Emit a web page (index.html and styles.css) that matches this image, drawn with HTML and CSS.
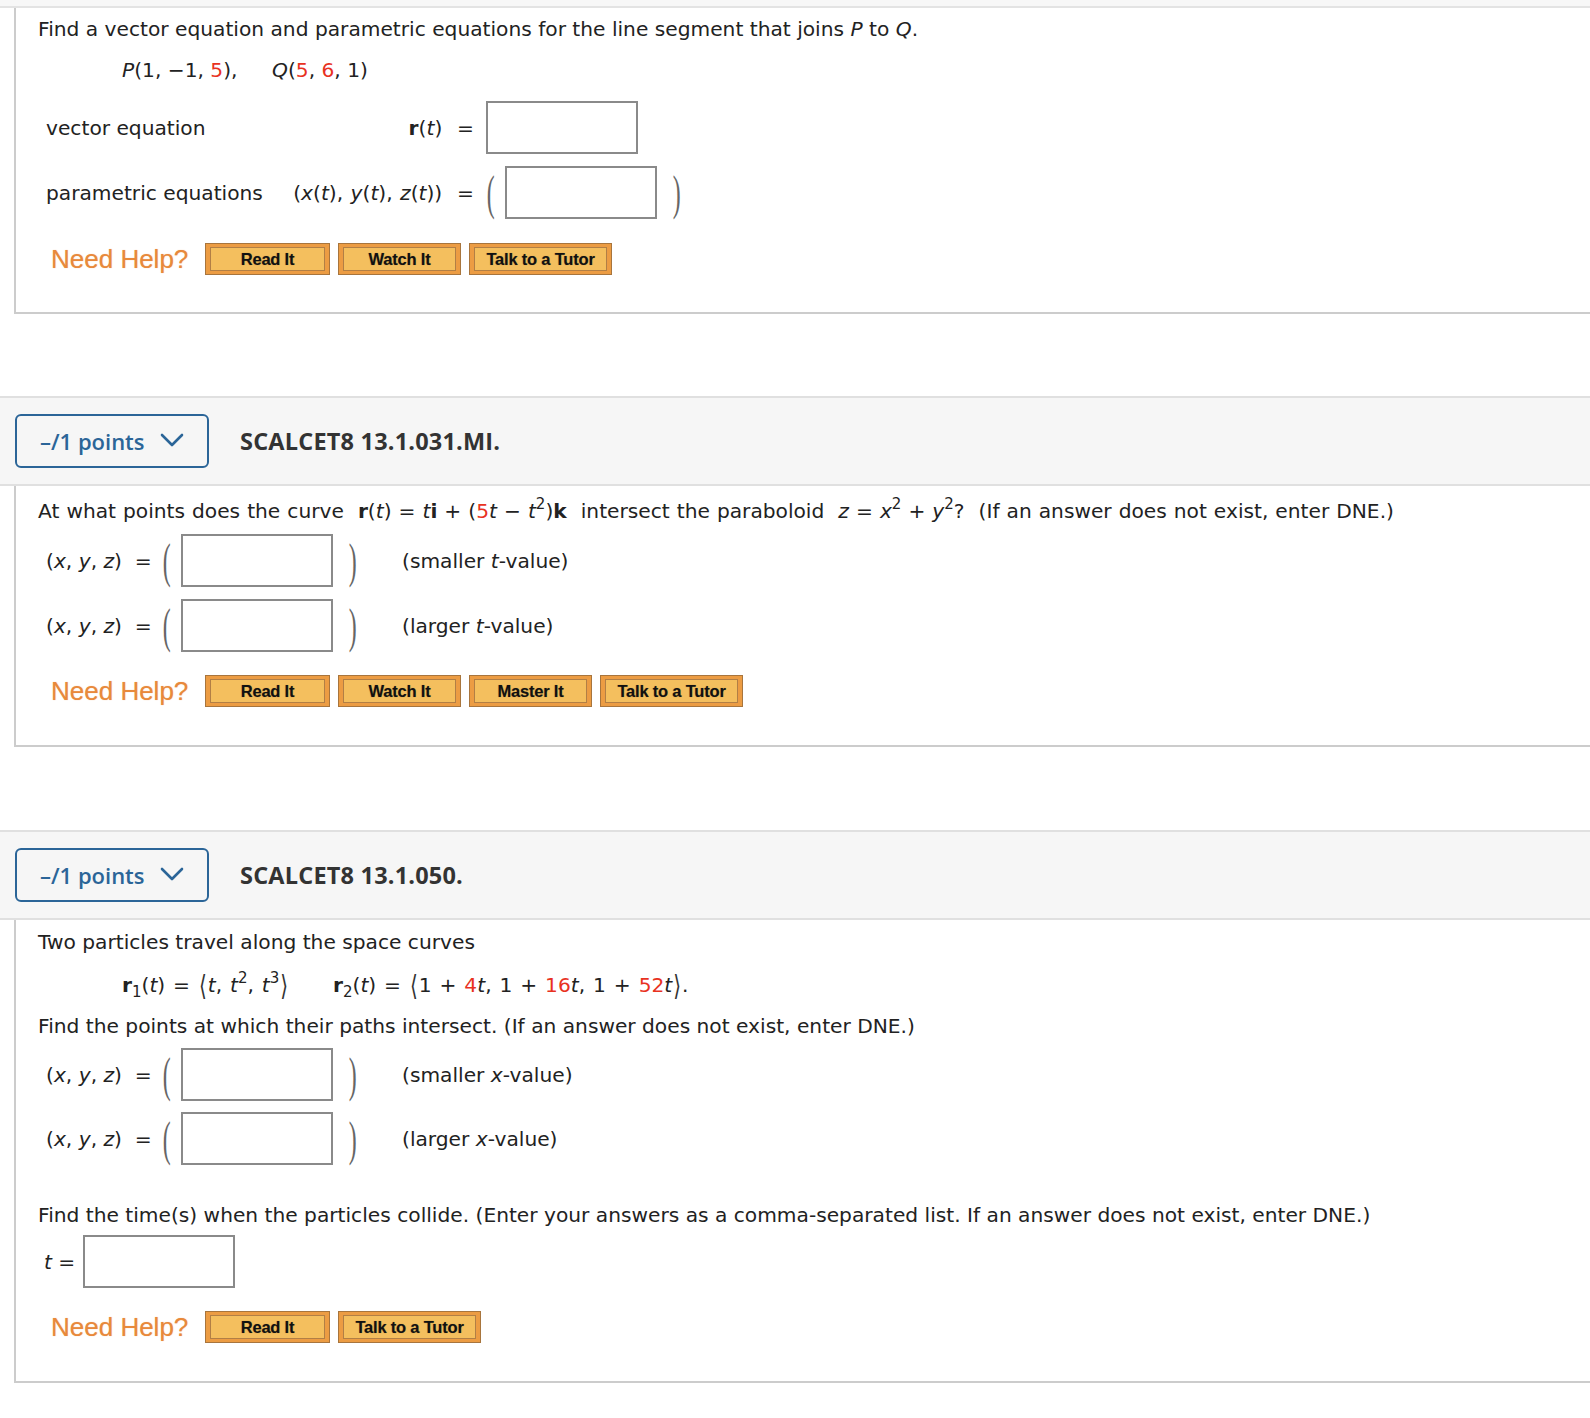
FILE: index.html
```html
<!DOCTYPE html>
<html>
<head>
<meta charset="utf-8">
<title>Questions</title>
<link rel="stylesheet" href="styles.css">
</head>
<body>
<div class="topbar"></div>

<section class="qbody q1">
  <p class="line">Find a vector equation and parametric equations for the line segment that joins <i>P</i> to <i>Q</i>.</p>
  <p class="line pts"><span class="ppt"><i>P</i>(1, −1, <span class="red">5</span>),</span><span><i>Q</i>(<span class="red">5</span>, <span class="red">6</span>, 1)</span></p>
  <div class="eqgrid">
    <div class="lbl">vector equation</div>
    <div class="math"><b>r</b>(<i>t</i>) &nbsp;=</div>
    <div class="field"><input class="box" type="text"></div>
    <div class="lbl">parametric equations</div>
    <div class="math">(<i>x</i>(<i>t</i>), <i>y</i>(<i>t</i>), <i>z</i>(<i>t</i>)) &nbsp;=</div>
    <div class="field"><span class="lp"><span>(</span></span><input class="box" type="text"><span class="rp"><span>)</span></span></div>
  </div>
  <div class="help">
    <span class="need">Need Help?</span>
    <span class="hb w-read"><span>Read It</span></span>
    <span class="hb w-watch"><span>Watch It</span></span>
    <span class="hb w-talk"><span>Talk to a Tutor</span></span>
  </div>
</section>

<header class="qhead">
  <div class="points">–/1 points<svg class="chev" width="24" height="14" viewBox="0 0 24 14"><polyline points="2,2 12,12 22,2" fill="none" stroke="#2b6598" stroke-width="2.6" stroke-linecap="round" stroke-linejoin="round"/></svg></div>
  <div class="qtitle">SCALCET8 13.1.031.MI.</div>
</header>

<section class="qbody q2">
  <p class="line mathline">At what points does the curve &nbsp;<b>r</b>(<i>t</i>) = <i>t</i><b>i</b> + (<span class="red">5</span><i>t</i> − <i>t</i><span class="sup">2</span>)<b>k</b> &nbsp;intersect the paraboloid &nbsp;<i>z</i> = <i>x</i><span class="sup">2</span> + <i>y</i><span class="sup">2</span>? &nbsp;(If an answer does not exist, enter DNE.)</p>
  <div class="xyzrow r-first">
    <span class="xl">(<i>x</i>, <i>y</i>, <i>z</i>) &nbsp;=</span>
    <span class="lp"><span>(</span></span><input class="box" type="text"><span class="rp"><span>)</span></span>
    <span class="note">(smaller <i>t</i>-value)</span>
  </div>
  <div class="xyzrow">
    <span class="xl">(<i>x</i>, <i>y</i>, <i>z</i>) &nbsp;=</span>
    <span class="lp"><span>(</span></span><input class="box" type="text"><span class="rp"><span>)</span></span>
    <span class="note">(larger <i>t</i>-value)</span>
  </div>
  <div class="help">
    <span class="need">Need Help?</span>
    <span class="hb w-read"><span>Read It</span></span>
    <span class="hb w-watch"><span>Watch It</span></span>
    <span class="hb w-master"><span>Master It</span></span>
    <span class="hb w-talk"><span>Talk to a Tutor</span></span>
  </div>
</section>

<header class="qhead">
  <div class="points">–/1 points<svg class="chev" width="24" height="14" viewBox="0 0 24 14"><polyline points="2,2 12,12 22,2" fill="none" stroke="#2b6598" stroke-width="2.6" stroke-linecap="round" stroke-linejoin="round"/></svg></div>
  <div class="qtitle">SCALCET8 13.1.050.</div>
</header>

<section class="qbody q3">
  <p class="line">Two particles travel along the space curves</p>
  <p class="line curves"><span class="c1"><b>r</b><span class="sub">1</span>(<i>t</i>) = <span class="ang">⟨</span><i>t</i>, <i>t</i><span class="sup">2</span>, <i>t</i><span class="sup">3</span><span class="ang">⟩</span></span><span><b>r</b><span class="sub">2</span>(<i>t</i>) = <span class="ang">⟨</span>1 + <span class="red">4</span><i>t</i>, 1 + <span class="red">16</span><i>t</i>, 1 + <span class="red">52</span><i>t</i><span class="ang">⟩</span>.</span></p>
  <p class="line find">Find the points at which their paths intersect. (If an answer does not exist, enter DNE.)</p>
  <div class="xyzrow r-first">
    <span class="xl">(<i>x</i>, <i>y</i>, <i>z</i>) &nbsp;=</span>
    <span class="lp"><span>(</span></span><input class="box" type="text"><span class="rp"><span>)</span></span>
    <span class="note">(smaller <i>x</i>-value)</span>
  </div>
  <div class="xyzrow">
    <span class="xl">(<i>x</i>, <i>y</i>, <i>z</i>) &nbsp;=</span>
    <span class="lp"><span>(</span></span><input class="box" type="text"><span class="rp"><span>)</span></span>
    <span class="note">(larger <i>x</i>-value)</span>
  </div>
  <p class="line time">Find the time(s) when the particles collide. (Enter your answers as a comma-separated list. If an answer does not exist, enter DNE.)</p>
  <div class="trow">
    <span class="tl"><i>t</i> =</span><input class="box" type="text">
  </div>
  <div class="help">
    <span class="need">Need Help?</span>
    <span class="hb w-read"><span>Read It</span></span>
    <span class="hb w-talk"><span>Talk to a Tutor</span></span>
  </div>
</section>
</body>
</html>
```

FILE: styles.css
```css
* { box-sizing: border-box; }

body {
  margin: 0;
  background: #fff;
  font-family: "DejaVu Sans", "Liberation Sans", sans-serif;
  font-size: 20.2px;
  color: #222;
}

.topbar {
  height: 8px;
  background: #f7f7f7;
  border-bottom: 2px solid #e3e3e3;
}

.qbody {
  margin-left: 14px;
  border-left: 2px solid #cccccc;
  border-bottom: 2px solid #cccccc;
  padding-left: 22px;
}

.q1 { padding-top: 9px; padding-bottom: 37px; }
.q2 { padding-top: 13px; padding-bottom: 38px; }
.q3 { padding-top: 10px; padding-bottom: 38px; }

.line {
  margin: 0;
  line-height: 24px;
  white-space: nowrap;
}

.mathline { word-spacing: 0.6px; }

i { font-style: italic; }
b { font-weight: bold; }

.red { color: #e8321f; }

.sup {
  font-size: 15px;
  line-height: 0;
  vertical-align: 9px;
}

.sub {
  font-size: 15px;
  line-height: 0;
  vertical-align: -5px;
}

.ang {
  display: inline-block;
  font-size: 20px;
  line-height: 1;
  color: #333;
  transform: scale(1, 1.4);
  margin: 0 1px;
}

.pts {
  margin-top: 17px;
  padding-left: 84px;
}

.ppt {
  display: inline-block;
  width: 150px;
}

.eqgrid {
  display: grid;
  grid-template-columns: 236px 192px auto;
  row-gap: 12px;
  margin-top: 19px;
  margin-left: 8px;
  align-items: center;
}

.eqgrid .math {
  text-align: right;
  white-space: nowrap;
  word-spacing: 1px;
}

.eqgrid .field {
  display: flex;
  align-items: center;
  padding-left: 12px;
}

.box {
  display: block;
  width: 152px;
  height: 53px;
  border: 2px solid #8a8a8a;
  background: #fff;
  margin: 0;
  padding: 0;
  outline: none;
}

.lp, .rp {
  display: inline-flex;
  align-items: center;
  height: 53px;
  font-family: "Liberation Serif", serif;
  font-size: 28px;
  color: #666;
}

.lp { width: 19px; }
.rp { width: 69px; padding-left: 15px; }

.lp > span, .rp > span {
  display: inline-block;
  transform: scale(0.85, 1.75);
}

.xyzrow {
  display: flex;
  align-items: center;
  margin-left: 8px;
  margin-top: 12px;
}

.xyzrow.r-first { margin-top: 11px; }

.q3 .xyzrow { margin-top: 11px; }
.q3 .xyzrow.r-first { margin-top: 10px; }

.xl {
  width: 116px;
  white-space: nowrap;
}

.note { white-space: nowrap; }

.curves {
  margin-top: 19px;
  padding-left: 84px;
  word-spacing: 1.5px;
}

.c1 {
  display: inline-block;
  width: 211px;
}

.find { margin-top: 17px; }
.time { margin-top: 38px; }

.trow {
  display: flex;
  align-items: center;
  margin-top: 8px;
  margin-left: 6px;
}

.tl { width: 39px; }

.help {
  display: flex;
  align-items: center;
  gap: 8px;
  margin-top: 23px;
  padding-left: 13px;
}

.q1 .help { margin-top: 24px; }

.need {
  width: 146px;
  font-family: "Liberation Sans", Arial, sans-serif;
  font-size: 26px;
  color: #e8893b;
  text-shadow: 0 0 1px rgba(232, 137, 59, 0.6);
  white-space: nowrap;
}

.hb {
  display: flex;
  height: 32px;
  padding: 3px 4px;
  border: 1px solid #a8753d;
  background: #ec9c43;
}

.hb > span {
  flex: 1;
  display: flex;
  align-items: center;
  justify-content: center;
  border: 1px solid #b27f45;
  background: #f4bf5e;
  font-family: "Liberation Sans", Arial, sans-serif;
  font-weight: bold;
  font-size: 16.5px;
  letter-spacing: -0.2px;
  color: #111;
  text-shadow: 0 0 1px rgba(0, 0, 0, 0.35);
  white-space: nowrap;
}

.w-read { width: 125px; }
.w-watch { width: 123px; }
.w-master { width: 123px; }
.w-talk { width: 143px; }

.qhead {
  margin-top: 82px;
  height: 90px;
  background: #f6f6f6;
  border-top: 2px solid #e0e0e0;
  border-bottom: 2px solid #e0e0e0;
  display: flex;
  align-items: center;
  padding-left: 15px;
}

.q2 + .qhead { margin-top: 83px; }

.points {
  width: 194px;
  height: 54px;
  border: 2px solid #2b6598;
  border-radius: 6px;
  display: flex;
  align-items: center;
  padding-left: 23px;
  color: #2b6598;
  font-family: "Open Sans", sans-serif;
  font-stretch: normal;
  font-weight: 600;
  font-size: 22px;
}

.chev {
  margin-left: 15px;
  margin-top: -2px;
}

.qtitle {
  margin-left: 31px;
  font-family: "Open Sans", sans-serif;
  font-stretch: normal;
  font-weight: 700;
  font-size: 23.5px;
  letter-spacing: 0.2px;
  color: #333;
}
```
